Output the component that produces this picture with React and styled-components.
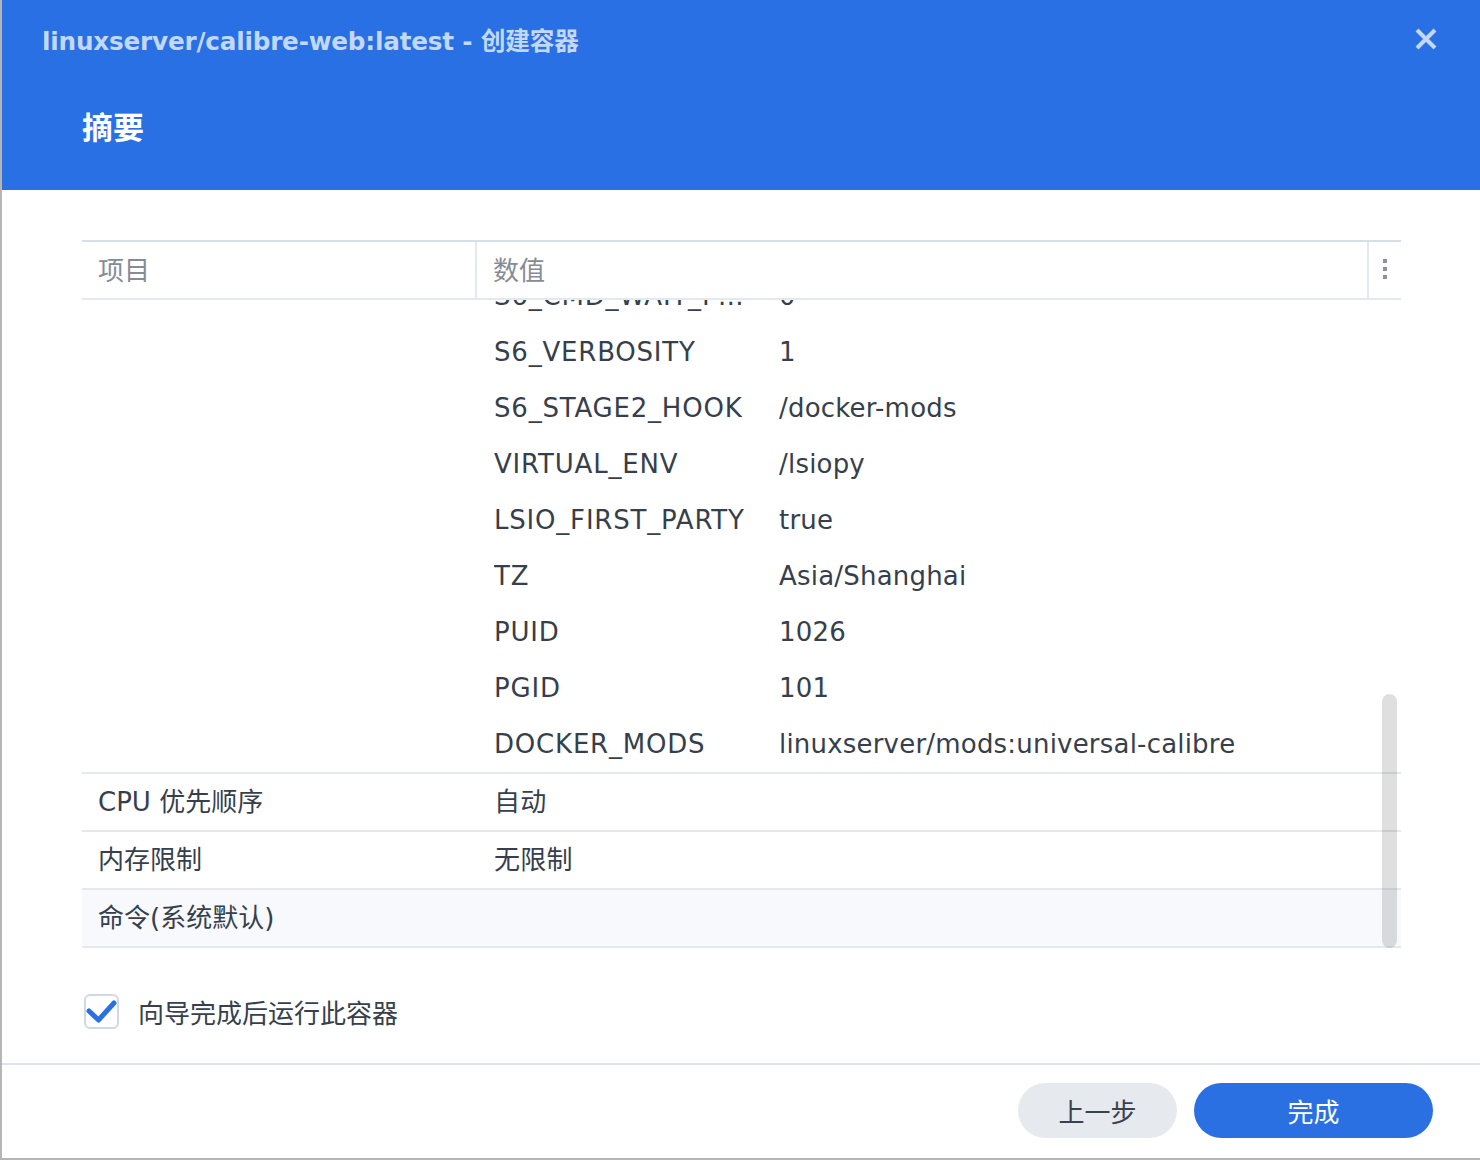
import React, { useLayoutEffect, useRef, useState } from 'react';
import styled, { createGlobalStyle } from 'styled-components';

const GlobalStyle = createGlobalStyle`
  html, body {
    margin: 0;
    padding: 0;
    background: #b5b5b5;
  }
  body {
    font-family: "DejaVu Sans", "Noto Sans CJK SC", sans-serif;
  }
  * {
    box-sizing: border-box;
  }
`;

const Dialog = styled.div`
  display: flex;
  flex-direction: column;
  width: 1478px;
  height: 1158px;
  margin-left: 2px;
  background: #fff;
`;

const Header = styled.header`
  height: 190px;
  background: #2870e3;
  padding: 23px 40px 0;
  flex-shrink: 0;
`;

const TitleBar = styled.div`
  display: flex;
  align-items: center;
  justify-content: space-between;
  height: 32px;
`;

const Title = styled.h1`
  margin: 0;
  font-size: 24.7px;
  font-weight: bold;
  color: #c3d7f7;
  letter-spacing: -0.2px;
`;

const CloseButton = styled.button`
  border: 0;
  background: none;
  padding: 0;
  width: 26px;
  height: 26px;
  margin-right: 1px;
  display: flex;
  align-items: center;
  justify-content: center;
  cursor: pointer;
`;

const StepTitle = styled.h2`
  margin: 53px 0 0 40px;
  font-size: 31px;
  font-weight: bold;
  color: #fff;
  line-height: 40px;
`;

const Content = styled.main`
  flex: 1;
  padding: 50px 79px 0 80px;
  display: flex;
  flex-direction: column;
`;

const Table = styled.div`
  border-top: 2px solid #d6dee7;
  position: relative;
`;

const HeadRow = styled.div`
  display: grid;
  grid-template-columns: 395px 1fr 32px;
  height: 58px;
  border-bottom: 2px solid #e4e9ef;
`;

const HeadCell = styled.div`
  display: flex;
  align-items: center;
  padding-left: ${(p) => (p.$menu ? 0 : 16)}px;
  padding-bottom: 3px;
  justify-content: ${(p) => (p.$menu ? 'center' : 'flex-start')};
  font-size: 26px;
  color: #868c94;
  border-right: ${(p) => (p.$last ? 'none' : '2px solid #e4e9ef')};
`;

const Body = styled.div`
  height: 648px;
  overflow-y: auto;
  position: relative;
  scrollbar-width: none;
  &::-webkit-scrollbar {
    display: none;
  }
`;

const Row = styled.div`
  display: grid;
  grid-template-columns: 395px 1fr;
  border-bottom: 2px solid #e5e9ee;
  background: ${(p) => (p.$hover ? '#f7f9fd' : '#fff')};
`;

const Cell = styled.div`
  padding: 0 16px;
  font-size: 26px;
  line-height: 56px;
  color: #363f4b;
  white-space: nowrap;
  overflow: hidden;
`;

const ValueCell = styled(Cell)`
  padding: 0 0 0 17px;
  letter-spacing: 0.2px;
`;

const SubRow = styled.div`
  display: grid;
  grid-template-columns: 285px 1fr;
  height: 56px;
  line-height: 56px;
`;

const SubName = styled.span`
  padding-right: 16px;
  overflow: hidden;
  text-overflow: ellipsis;
  white-space: nowrap;
  letter-spacing: 0.8px;
`;

const SubValue = styled.span`
  white-space: nowrap;
  overflow: hidden;
`;

const Thumb = styled.div`
  position: absolute;
  right: 4px;
  width: 15px;
  border-radius: 8px;
  background: rgba(0, 0, 0, 0.125);
  pointer-events: none;
`;

const CheckRow = styled.label`
  display: flex;
  align-items: center;
  gap: 19px;
  margin: 45px 0 0 2px;
  font-size: 26px;
  color: #363f4b;
  cursor: pointer;
`;

const CheckBox = styled.span`
  width: 35px;
  height: 35px;
  border: 2px solid #cfd9e6;
  border-radius: 6px;
  display: flex;
  align-items: center;
  justify-content: center;
  background: #fff;
`;

const Footer = styled.footer`
  height: 95px;
  flex-shrink: 0;
  border-top: 2px solid #dee4eb;
  display: flex;
  justify-content: flex-end;
  align-items: flex-start;
  gap: 17px;
  padding: 18px 47px 0 0;
`;

const Button = styled.button`
  height: 55px;
  width: ${(p) => p.$width}px;
  border: 0;
  border-radius: 28px;
  font-family: inherit;
  font-size: 26px;
  cursor: pointer;
  background: ${(p) => (p.$primary ? '#2a70e3' : '#e6eaef')};
  color: ${(p) => (p.$primary ? '#fff' : '#3a424d')};
`;

const rows = [
  { name: '镜像', value: 'linuxserver/calibre-web:latest' },
  { name: '容器名称', value: 'linuxserver-calibre-web-1' },
  { name: '启用自动重新启动', value: '是' },
  { name: '启用 Web 门户', value: '否' },
  {
    name: '端口设置',
    sub: [
      ['8083', '8083 (TCP)'],
      ['8084', '8084 (TCP)'],
    ],
  },
  {
    name: '存储空间设置',
    sub: [
      ['/docker/calibre-web/config', '/config (读写)'],
      ['/docker/calibre-web/books', '/books (读写)'],
    ],
  },
  { name: '网络', value: 'bridge' },
  { name: '链接', value: '无' },
  { name: '启用资源限制', value: '否' },
  { name: '执行命令', value: '/init' },
  {
    name: '环境变量',
    sub: [
      ['PATH', '/lsiopy/bin:/usr/local/sbin:/usr/local/bin:/usr/sbin:/usr/bin:/sbin:/bin'],
      ['HOME', '/root'],
      ['LANGUAGE', 'en_US.UTF-8'],
      ['LANG', 'en_US.UTF-8'],
      ['TERM', 'xterm'],
      ['S6_CMD_WAIT_FOR_SERVICES_MAXTIME', '0'],
      ['S6_VERBOSITY', '1'],
      ['S6_STAGE2_HOOK', '/docker-mods'],
      ['VIRTUAL_ENV', '/lsiopy'],
      ['LSIO_FIRST_PARTY', 'true'],
      ['TZ', 'Asia/Shanghai'],
      ['PUID', '1026'],
      ['PGID', '101'],
      ['DOCKER_MODS', 'linuxserver/mods:universal-calibre'],
    ],
  },
  { name: 'CPU 优先顺序', value: '自动' },
  { name: '内存限制', value: '无限制' },
  { name: '命令(系统默认)', value: '', hover: true },
];

function CloseIcon() {
  return (
    <svg width="24" height="24" viewBox="0 0 24 24">
      <path
        d="M3 3 L21 21 M21 3 L3 21"
        stroke="#c3d7f7"
        strokeWidth="4"
        strokeLinecap="butt"
      />
    </svg>
  );
}

function MenuDots() {
  return (
    <svg width="6" height="22" viewBox="0 0 6 22">
      <rect x="1" y="1" width="4" height="4" fill="#8d9096" />
      <rect x="1" y="9" width="4" height="4" fill="#8d9096" />
      <rect x="1" y="17" width="4" height="4" fill="#8d9096" />
    </svg>
  );
}

function CheckMark() {
  return (
    <svg width="31" height="31" viewBox="0 0 31 31">
      <path
        d="M3 15 L12.5 24 L28 7"
        fill="none"
        stroke="#2a70e3"
        strokeWidth="5"
        strokeLinecap="round"
        strokeLinejoin="round"
      />
    </svg>
  );
}

function SummaryTable() {
  const bodyRef = useRef(null);
  const [thumb, setThumb] = useState({ top: 0, height: 0 });

  useLayoutEffect(() => {
    const el = bodyRef.current;
    el.scrollTop = el.scrollHeight;
    const ratio = el.clientHeight / el.scrollHeight;
    const height = Math.round(el.clientHeight * ratio);
    const top = Math.round(el.scrollTop * ratio);
    setThumb({ top: top + 58, height });
  }, []);

  return (
    <Table>
      <HeadRow>
        <HeadCell>项目</HeadCell>
        <HeadCell>数值</HeadCell>
        <HeadCell $menu $last>
          <MenuDots />
        </HeadCell>
      </HeadRow>
      <Body ref={bodyRef}>
        {rows.map((row) => (
          <Row key={row.name} $hover={row.hover}>
            <Cell>{row.name}</Cell>
            <ValueCell>
              {row.sub
                ? row.sub.map(([k, v]) => (
                    <SubRow key={k}>
                      <SubName>{k}</SubName>
                      <SubValue>{v}</SubValue>
                    </SubRow>
                  ))
                : row.value}
            </ValueCell>
          </Row>
        ))}
      </Body>
      <Thumb style={{ top: thumb.top, height: thumb.height }} />
    </Table>
  );
}

export default function App() {
  const [runAfter, setRunAfter] = useState(true);

  return (
    <>
      <GlobalStyle />
      <Dialog>
        <Header>
          <TitleBar>
            <Title>linuxserver/calibre-web:latest - 创建容器</Title>
            <CloseButton aria-label="关闭">
              <CloseIcon />
            </CloseButton>
          </TitleBar>
          <StepTitle>摘要</StepTitle>
        </Header>
        <Content>
          <SummaryTable />
          <CheckRow onClick={() => setRunAfter(!runAfter)}>
            <CheckBox>{runAfter && <CheckMark />}</CheckBox>
            向导完成后运行此容器
          </CheckRow>
        </Content>
        <Footer>
          <Button $width={159}>上一步</Button>
          <Button $primary $width={239}>
            完成
          </Button>
        </Footer>
      </Dialog>
    </>
  );
}
